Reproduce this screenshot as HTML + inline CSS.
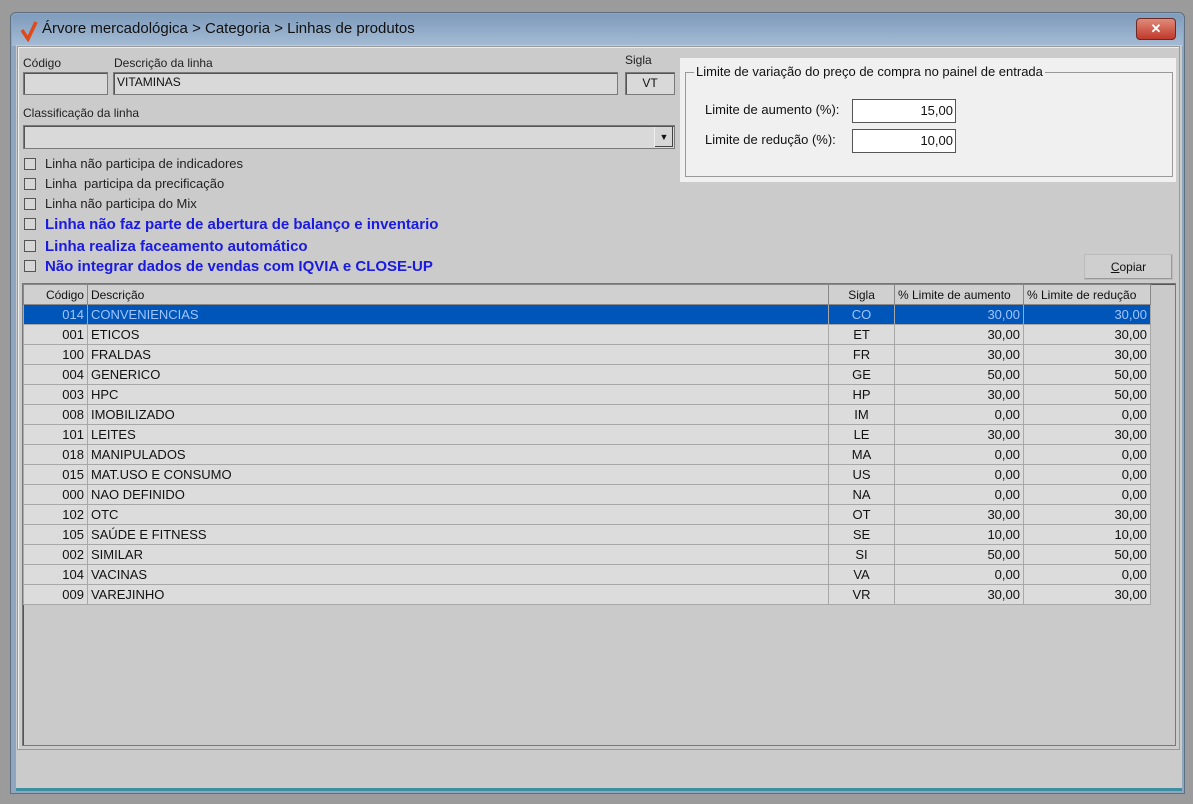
<!DOCTYPE html>
<html><head><meta charset="utf-8"><style>
*{box-sizing:border-box;margin:0;padding:0}
body{width:1193px;height:804px;background:#9b9b9b;font-family:"Liberation Sans",sans-serif;font-size:12px;color:#111;position:relative;overflow:hidden}
.a{position:absolute}
.win{left:10px;top:12px;width:1175px;height:782px;background:#8fa6be;border:1px solid #5d6f80;border-radius:6px 6px 0 0}
.title{left:12px;top:14px;width:1171px;height:32px;background:linear-gradient(#7f9cbc,#a4bbd4);border-radius:5px 5px 0 0}
.body{left:16px;top:45px;width:1166px;height:746px;background:#cbcbcb;border-bottom:3px solid #3c8ea0}
.lbl{font-size:12px;color:#222;white-space:nowrap}
.ck{font-size:13px;color:#222;white-space:nowrap}
.inp{background:#d9d9d9;border:1px solid #7a7a7a;box-shadow:inset 1px 1px 0 #555}
.cb{width:12px;height:12px;border:1px solid #555;background:#d6d6d6}
.blue{color:#1a1ae0;font-weight:bold;font-size:15px;white-space:nowrap}
table{border-collapse:collapse;font-size:13px}
td{height:20px;border:1px solid #a8a8a8;padding:0 3px;white-space:nowrap;background:#dcdcdc}
tr.h td{background:#d0d0d0;height:20px;border-color:#888;font-size:12px}
tr.s td{background:#0056b8;color:#9fc4ff}
.r{text-align:right}.c{text-align:center}
</style></head><body>
<div class="a win"></div>
<div class="a title"></div>
<svg class="a" style="left:19px;top:20px" width="20" height="22"><path d="M3 10 L9 19 L17 2" stroke="#e04a1a" stroke-width="3.5" fill="none"/></svg>
<div class="a" style="left:42px;top:20px;font-size:15px;color:#111">Árvore mercadológica &gt; Categoria &gt; Linhas de produtos</div>
<div class="a" style="left:1136px;top:18px;width:40px;height:22px;background:linear-gradient(#e08a7a,#c0392b);border:1px solid #6b2a22;border-radius:4px;color:#fff;text-align:center;font-weight:bold;font-size:13px;line-height:20px">✕</div>
<div class="a body"></div>
<div class="a" style="left:17px;top:46px;width:1163px;height:704px;border:1px solid #999;box-shadow:inset 1px 1px 0 #eee"></div>

<div class="a lbl" style="left:23px;top:56px">Código</div>
<div class="a lbl" style="left:114px;top:56px">Descrição da linha</div>
<div class="a lbl" style="left:625px;top:53px">Sigla</div>
<div class="a inp" style="left:23px;top:72px;width:85px;height:23px"></div>
<div class="a inp" style="left:113px;top:72px;width:505px;height:23px;padding:2px 3px">VITAMINAS</div>
<div class="a inp" style="left:625px;top:72px;width:50px;height:23px;text-align:center;padding-top:3px">VT</div>
<div class="a lbl" style="left:23px;top:106px">Classificação da linha</div>
<div class="a inp" style="left:23px;top:125px;width:652px;height:24px"></div>
<div class="a" style="left:654px;top:127px;width:19px;height:20px;background:#d6d6d6;border-left:1px solid #eee;box-shadow:inset -1px -1px 0 #444;text-align:center;font-size:9px;line-height:20px">▼</div>

<div class="a cb" style="left:24px;top:158px"></div><div class="a ck" style="left:45px;top:156px">Linha não participa de indicadores</div>
<div class="a cb" style="left:24px;top:178px"></div><div class="a ck" style="left:45px;top:176px">Linha &nbsp;participa da precificação</div>
<div class="a cb" style="left:24px;top:198px"></div><div class="a ck" style="left:45px;top:196px">Linha não participa do Mix</div>
<div class="a cb" style="left:24px;top:218px"></div><div class="a blue" style="left:45px;top:216px">Linha não faz parte de abertura de balanço e inventario</div>
<div class="a cb" style="left:24px;top:240px"></div><div class="a blue" style="left:45px;top:238px">Linha realiza faceamento automático</div>
<div class="a cb" style="left:24px;top:260px"></div><div class="a blue" style="left:45px;top:258px">Não integrar dados de vendas com IQVIA e CLOSE-UP</div>

<div class="a" style="left:680px;top:58px;width:496px;height:124px;background:#f0f0f0"></div>
<div class="a" style="left:685px;top:72px;width:488px;height:105px;border:1px solid #999"></div>
<div class="a" style="left:694px;top:64px;background:#f0f0f0;padding:0 2px;font-size:13px">Limite de variação do preço de compra no painel de entrada</div>
<div class="a" style="left:705px;top:102px;font-size:13px">Limite de aumento (%):</div>
<div class="a" style="left:705px;top:132px;font-size:13px">Limite de redução (%):</div>
<div class="a" style="left:852px;top:99px;width:104px;height:24px;background:#fff;border:1px solid #555;text-align:right;padding:3px 2px;font-size:13px">15,00</div>
<div class="a" style="left:852px;top:129px;width:104px;height:24px;background:#fff;border:1px solid #555;text-align:right;padding:3px 2px;font-size:13px">10,00</div>

<div class="a" style="left:1084px;top:254px;width:89px;height:26px;background:#cfcfcf;border:1px solid #bbb;box-shadow:inset -1px -1px 0 #999;text-align:center;line-height:24px"><u>C</u>opiar</div>

<div class="a" style="left:22px;top:283px;width:1154px;height:463px;border:1px solid #777;box-shadow:inset 1px 1px 0 #555;background:#cacaca"></div>
<table class="a" style="left:23px;top:284px;width:1128px">
<colgroup><col style="width:64px"><col style="width:742px"><col style="width:66px"><col style="width:129px"><col style="width:127px"></colgroup>
<tr class="h"><td class="r">Código</td><td>Descrição</td><td class="c">Sigla</td><td>% Limite de aumento</td><td>% Limite de redução</td></tr>
<tr class="s"><td class="r">014</td><td>CONVENIENCIAS</td><td class="c">CO</td><td class="r">30,00</td><td class="r">30,00</td></tr>
<tr><td class="r">001</td><td>ETICOS</td><td class="c">ET</td><td class="r">30,00</td><td class="r">30,00</td></tr>
<tr><td class="r">100</td><td>FRALDAS</td><td class="c">FR</td><td class="r">30,00</td><td class="r">30,00</td></tr>
<tr><td class="r">004</td><td>GENERICO</td><td class="c">GE</td><td class="r">50,00</td><td class="r">50,00</td></tr>
<tr><td class="r">003</td><td>HPC</td><td class="c">HP</td><td class="r">30,00</td><td class="r">50,00</td></tr>
<tr><td class="r">008</td><td>IMOBILIZADO</td><td class="c">IM</td><td class="r">0,00</td><td class="r">0,00</td></tr>
<tr><td class="r">101</td><td>LEITES</td><td class="c">LE</td><td class="r">30,00</td><td class="r">30,00</td></tr>
<tr><td class="r">018</td><td>MANIPULADOS</td><td class="c">MA</td><td class="r">0,00</td><td class="r">0,00</td></tr>
<tr><td class="r">015</td><td>MAT.USO E CONSUMO</td><td class="c">US</td><td class="r">0,00</td><td class="r">0,00</td></tr>
<tr><td class="r">000</td><td>NAO DEFINIDO</td><td class="c">NA</td><td class="r">0,00</td><td class="r">0,00</td></tr>
<tr><td class="r">102</td><td>OTC</td><td class="c">OT</td><td class="r">30,00</td><td class="r">30,00</td></tr>
<tr><td class="r">105</td><td>SAÚDE E FITNESS</td><td class="c">SE</td><td class="r">10,00</td><td class="r">10,00</td></tr>
<tr><td class="r">002</td><td>SIMILAR</td><td class="c">SI</td><td class="r">50,00</td><td class="r">50,00</td></tr>
<tr><td class="r">104</td><td>VACINAS</td><td class="c">VA</td><td class="r">0,00</td><td class="r">0,00</td></tr>
<tr><td class="r">009</td><td>VAREJINHO</td><td class="c">VR</td><td class="r">30,00</td><td class="r">30,00</td></tr>
</table>
</body></html>
